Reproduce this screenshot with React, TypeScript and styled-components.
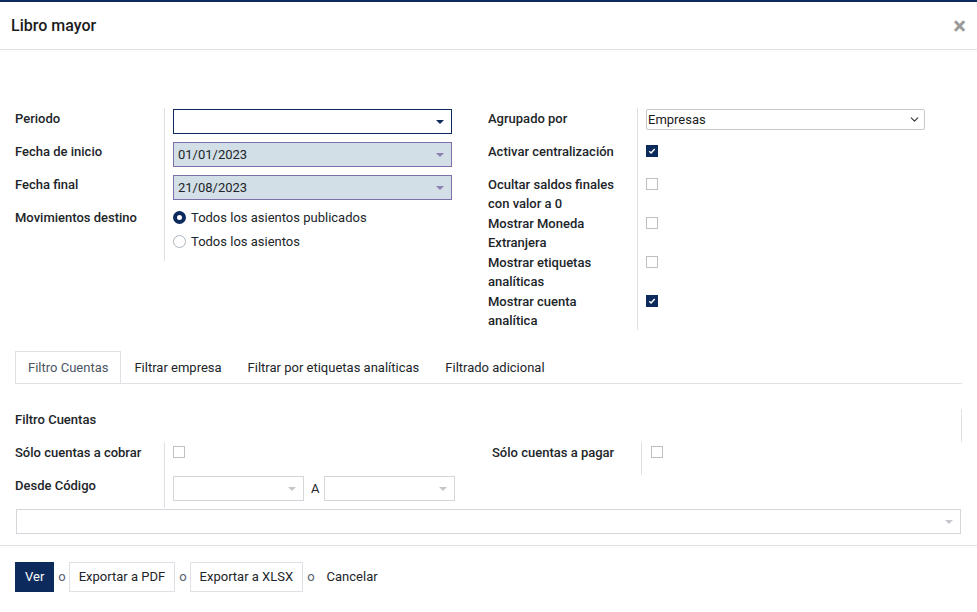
import styled, { createGlobalStyle } from "styled-components";
import { ChevronDown } from "lucide-react";

const navy = "#0c2a5c";
const line = "#dee2e6";

const GlobalStyle = createGlobalStyle`
	* { box-sizing: border-box; }
	body {
		margin: 0;
		background: #fff;
		font-family: Roboto, "Noto Sans", Arial, sans-serif;
		font-size: 13px;
		color: #212529;
	}
`;

const Page = styled.div`
	width: 977px;
	height: 612px;
	display: flex;
	flex-direction: column;
	overflow: hidden;
`;

const TopStrip = styled.div`
	height: 2px;
	background: ${navy};
`;

const Header = styled.header`
	display: flex;
	align-items: center;
	justify-content: space-between;
	height: 48px;
	padding: 0 11px 0 11px;
	border-bottom: 1px solid ${line};
`;

const Title = styled.h4`
	margin: 0;
	font-size: 16px;
	font-weight: 500;
	color: #1b1b1b;
`;

const Close = styled.span`
	font-size: 24px;
	font-weight: 700;
	color: #9a9a9a;
	line-height: 1;
`;

const Body = styled.main`
	flex: 1;
	padding: 58px 15px 10px;
`;

const Columns = styled.div`
	display: grid;
	grid-template-columns: 473px 473px;
`;

const Group = styled.div`
	display: flex;
	flex-direction: column;
`;

const Row = styled.div`
	display: grid;
	grid-template-columns: 149px 1fr;
	min-height: 33px;
`;

const Label = styled.div`
	padding: 1px 10px 0 0;
	line-height: 19px;
	font-weight: 500;
`;

const Field = styled.div<{ $pb?: number; $pl?: number }>`
	border-left: 1px solid ${line};
	padding: 1px 0 ${p => p.$pb ?? 0}px ${p => p.$pl ?? 8}px;
	display: flex;
	align-items: flex-start;
`;

type Tone = "focus" | "required" | "plain";

const tones: Record<Tone, { border: string; bg: string; caret: string }> = {
	focus: { border: navy, bg: "#fff", caret: navy },
	required: { border: "#7d6fab", bg: "#d2dfe6", caret: "#8b80b3" },
	plain: { border: "#d3d6da", bg: "#fff", caret: "#c4c7cb" },
};

const SelectBox = styled.div<{ $tone: Tone; $w?: number; $h?: number }>`
	display: flex;
	align-items: center;
	justify-content: space-between;
	width: ${p => (p.$w ? `${p.$w}px` : "auto")};
	height: ${p => p.$h ?? 25}px;
	padding: 0 7px 0 4px;
	border: 1px solid ${p => tones[p.$tone].border};
	background: ${p => tones[p.$tone].bg};
	line-height: 19px;
`;

const Caret = styled.span<{ $c: string }>`
	width: 0;
	height: 0;
	border-left: 4px solid transparent;
	border-right: 4px solid transparent;
	border-top: 4px solid ${p => p.$c};
`;

const NativeSelect = styled.div`
	display: flex;
	align-items: center;
	justify-content: space-between;
	width: 279px;
	height: 21px;
	padding: 0 3px 0 1px;
	border: 1px solid #c9c9c9;
	border-radius: 2px;
	color: #1b1b1b;
`;

const Check = styled.span<{ $on?: boolean }>`
	display: inline-flex;
	align-items: center;
	justify-content: center;
	width: 12px;
	height: 12px;
	margin-top: 3px;
	border: 1px solid ${p => (p.$on ? navy : "#bcc1c6")};
	background: ${p => (p.$on ? navy : "#fff")};
`;

const RadioList = styled.div`
	display: flex;
	flex-direction: column;
	gap: 5px;
`;

const RadioItem = styled.label`
	display: flex;
	align-items: center;
	gap: 5px;
	line-height: 19px;
`;

const RadioDot = styled.span<{ $on?: boolean }>`
	width: 13px;
	height: 13px;
	border-radius: 50%;
	background: #fff;
	border: ${p => (p.$on ? `4px solid ${navy}` : "1px solid #adb5bd")};
`;

const Tabs = styled.nav`
	display: flex;
	margin-top: 21px;
	border-bottom: 1px solid ${line};
`;

const Tab = styled.div<{ $active?: boolean }>`
	padding: 6px 12px;
	line-height: 19px;
	border: 1px solid ${p => (p.$active ? line : "transparent")};
	border-bottom: none;
	color: ${p => (p.$active ? "#4b5563" : "#212529")};
`;

const Pane = styled.section`
	padding-top: 25px;
`;

const PaneHead = styled.div`
	min-height: 33px;
	padding-top: 1px;
	line-height: 19px;
	font-weight: 500;
	border-right: 1px solid ${line};
`;

const FilterGrid = styled.div`
	display: grid;
	grid-template-columns: 477px 1fr;
	align-items: start;
`;

const RangeSep = styled.span`
	margin: 0 5px 0 7px;
	line-height: 25px;
`;

const WideSelect = styled(SelectBox)`
	margin: 1px 1px 0;
`;

const Footer = styled.footer`
	display: flex;
	align-items: baseline;
	padding: 16px 15px 20px;
	border-top: 1px solid ${line};
`;

const Btn = styled.button<{ $variant: "primary" | "secondary" | "link" }>`
	height: 30px;
	padding: 0 ${p => (p.$variant === "link" ? 8 : 9)}px;
	line-height: 28px;
	font-family: inherit;
	font-size: 13px;
	border: 1px solid ${p => (p.$variant === "primary" ? navy : p.$variant === "secondary" ? line : "transparent")};
	background: ${p => (p.$variant === "primary" ? navy : "#fff")};
	color: ${p => (p.$variant === "primary" ? "#fff" : "#212529")};
	border-radius: 0;
`;

const Or = styled.span`
	margin: 0 3px 0 4px;
	color: #566170;
`;

const Tick = () => (
	<svg width="8" height="8" viewBox="0 0 8 8">
		<path d="M1.3 4.3 L3.1 6 L6.7 2" fill="none" stroke="#fff" strokeWidth="1.5" />
	</svg>
);

const DateField = ({ value }: { value: string }) => (
	<SelectBox $tone="required" $w={279}>
		<span>{value}</span>
		<Caret $c={tones.required.caret} />
	</SelectBox>
);

const checks: { label: string; on: boolean }[] = [
	{ label: "Activar centralización", on: true },
	{ label: "Ocultar saldos finales con valor a 0", on: false },
	{ label: "Mostrar Moneda Extranjera", on: false },
	{ label: "Mostrar etiquetas analíticas", on: false },
	{ label: "Mostrar cuenta analítica", on: true },
];

const tabs = ["Filtro Cuentas", "Filtrar empresa", "Filtrar por etiquetas analíticas", "Filtrado adicional"];

export default function App() {
	return (
		<Page>
			<GlobalStyle />
			<TopStrip />
			<Header>
				<Title>Libro mayor</Title>
				<Close>×</Close>
			</Header>
			<Body>
				<Columns>
					<Group>
						<Row>
							<Label>Periodo</Label>
							<Field $pb={7}>
								<SelectBox $tone="focus" $w={279}>
									<span />
									<Caret $c={navy} />
								</SelectBox>
							</Field>
						</Row>
						<Row>
							<Label>Fecha de inicio</Label>
							<Field $pb={7}>
								<DateField value="01/01/2023" />
							</Field>
						</Row>
						<Row>
							<Label>Fecha final</Label>
							<Field $pb={7}>
								<DateField value="21/08/2023" />
							</Field>
						</Row>
						<Row>
							<Label>Movimientos destino</Label>
							<Field $pb={10}>
								<RadioList>
									<RadioItem><RadioDot $on />Todos los asientos publicados</RadioItem>
									<RadioItem><RadioDot />Todos los asientos</RadioItem>
								</RadioList>
							</Field>
						</Row>
					</Group>
					<Group>
						<Row>
							<Label>Agrupado por</Label>
							<Field>
								<NativeSelect>
									<span>Empresas</span>
									<ChevronDown size={13} strokeWidth={2} color="#333" />
								</NativeSelect>
							</Field>
						</Row>
						{checks.map(c => (
							<Row key={c.label}>
								<Label>{c.label}</Label>
								<Field>
									<Check $on={c.on}>{c.on && <Tick />}</Check>
								</Field>
							</Row>
						))}
					</Group>
				</Columns>

				<Tabs>
					{tabs.map((t, i) => (
						<Tab key={t} $active={i === 0}>{t}</Tab>
					))}
				</Tabs>

				<Pane>
					<PaneHead>Filtro Cuentas</PaneHead>
					<FilterGrid>
						<Group>
							<Row>
								<Label>Sólo cuentas a cobrar</Label>
								<Field><Check /></Field>
							</Row>
							<Row>
								<Label>Desde Código</Label>
								<Field $pb={7}>
									<SelectBox $tone="plain" $w={131}>
										<span />
										<Caret $c={tones.plain.caret} />
									</SelectBox>
									<RangeSep>A</RangeSep>
									<SelectBox $tone="plain" $w={131}>
										<span />
										<Caret $c={tones.plain.caret} />
									</SelectBox>
								</Field>
							</Row>
						</Group>
						<Group>
							<Row>
								<Label>Sólo cuentas a pagar</Label>
								<Field $pl={9}><Check /></Field>
							</Row>
						</Group>
					</FilterGrid>
					<WideSelect $tone="plain">
						<span />
						<Caret $c={tones.plain.caret} />
					</WideSelect>
				</Pane>
			</Body>
			<Footer>
				<Btn $variant="primary">Ver</Btn>
				<Or>o</Or>
				<Btn $variant="secondary">Exportar a PDF</Btn>
				<Or>o</Or>
				<Btn $variant="secondary">Exportar a XLSX</Btn>
				<Or>o</Or>
				<Btn $variant="link">Cancelar</Btn>
			</Footer>
		</Page>
	);
}
